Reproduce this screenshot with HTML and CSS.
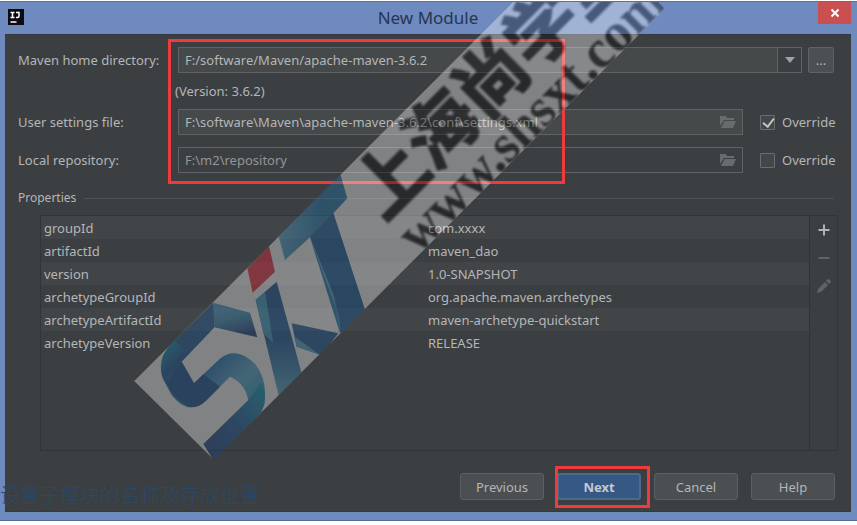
FILE: index.html
```html
<!DOCTYPE html>
<html lang="en">
<head>
<meta charset="utf-8">
<title>New Module</title>
<link rel="stylesheet" href="styles.css">
</head>
<body>
<main class="window">
  <header class="titlebar">
    <svg class="app-icon" viewBox="0 0 16 16" aria-hidden="true"><rect width="16" height="16" fill="#0b0c12"/><path d="M2.500 3.500h4M4.500 3.500v5M2.500 8.500h4M8 3.500h3v3.500q0 1.500-1.500 1.500H8" fill="none" stroke="#fff" stroke-width="1.500"/><path d="M2.500 13h6" stroke="#fff" stroke-width="1.500"/></svg>
    <h1 class="title">New Module</h1>
    <button class="close" aria-label="Close"><svg width="10" height="10" viewBox="0 0 10 10"><path d="M1.500 1.500l7 7M8.500 1.500l-7 7" stroke="#fff" stroke-width="2"/></svg></button>
  </header>
  <div class="content">
    <form class="form">
      <div class="row row-home">
        <label class="label" for="home">Maven home directory:</label>
        <div class="field combo">
          <input id="home" type="text" value="F:/software/Maven/apache-maven-3.6.2">
          <button class="arrow" type="button" aria-label="Show list"><svg width="10" height="6" viewBox="0 0 10 6"><path d="M0 0h10L5 6z" fill="#a0a3a5"/></svg></button>
        </div>
        <button class="browse" type="button">...</button>
      </div>
      <p class="version">(Version: 3.6.2)</p>
      <div class="row">
        <label class="label" for="settings">User settings file:</label>
        <div class="field">
          <input id="settings" type="text" value="F:\software\Maven\apache-maven-3.6.2\conf\settings.xml">
          <svg class="folder" viewBox="0 0 16 12" aria-hidden="true"><path d="M0 10V0h6l1 2h7v2H4zM4.500 5H16l-3 7H1z" fill="#686c6e"/></svg>
        </div>
        <label class="override"><input type="checkbox" checked>Override</label>
      </div>
      <div class="row">
        <label class="label" for="repo">Local repository:</label>
        <div class="field muted">
          <input id="repo" type="text" value="F:\m2\repository">
          <svg class="folder" viewBox="0 0 16 12" aria-hidden="true"><path d="M0 10V0h6l1 2h7v2H4zM4.500 5H16l-3 7H1z" fill="#686c6e"/></svg>
        </div>
        <label class="override"><input type="checkbox">Override</label>
      </div>
      <div class="mark mark-form"></div>
    </form>
    <h2 class="section">Properties</h2>
    <section class="panel">
      <div class="table-area">
        <table>
          <tbody>
            <tr><td>groupId</td><td>com.xxxx</td></tr>
            <tr><td>artifactId</td><td>maven_dao</td></tr>
            <tr><td>version</td><td>1.0-SNAPSHOT</td></tr>
            <tr><td>archetypeGroupId</td><td>org.apache.maven.archetypes</td></tr>
            <tr><td>archetypeArtifactId</td><td>maven-archetype-quickstart</td></tr>
            <tr><td>archetypeVersion</td><td>RELEASE</td></tr>
          </tbody>
        </table>
      </div>
      <div class="tools">
        <button aria-label="Add"><svg width="14" height="14" viewBox="0 0 14 14"><path d="M7 1.500v11M1.500 7h11" stroke="#b0b3b5" stroke-width="2"/></svg></button>
        <button aria-label="Remove"><svg width="14" height="14" viewBox="0 0 14 14"><path d="M1.500 7h11" stroke="#606365" stroke-width="2"/></svg></button>
        <button aria-label="Edit"><svg width="14" height="14" viewBox="0 0 14 14"><path d="M0 14l1-4 7-7 3 3-7 7zM9 2l1.500-1.500q1-1 2.500.5t.5 2.500L12 5z" fill="#606365"/></svg></button>
      </div>
    </section>
    <footer class="actions">
      <button class="btn">Previous</button>
      <div class="next"><button class="btn primary">Next</button><div class="mark mark-next"></div></div>
      <button class="btn">Cancel</button>
      <button class="btn">Help</button>
    </footer>
  </div>
  <p class="caption" lang="zh">设置子模块的名称及存放位置</p>
  <svg class="watermark" width="857" height="520" viewBox="0 1 857 520" aria-hidden="true">
    <defs>
      <linearGradient id="s1" x1="0" y1="0" x2="1" y2="1"><stop offset="0" stop-color="#1763a8"/><stop offset=".2" stop-color="#00a4c4"/><stop offset=".36" stop-color="#0b5099"/><stop offset=".55" stop-color="#1674b8"/><stop offset=".75" stop-color="#58add8"/><stop offset="1" stop-color="#0095bd"/></linearGradient>
      <linearGradient id="s2" x1="0" y1="1" x2="1" y2="0"><stop offset="0" stop-color="#143982"/><stop offset=".5" stop-color="#17569c"/><stop offset="1" stop-color="#009dc2"/></linearGradient>
      <linearGradient id="arm" x1="0" y1="0" x2=".3" y2="1"><stop offset="0" stop-color="#54a7d4"/><stop offset=".5" stop-color="#328cc0"/><stop offset="1" stop-color="#103b80"/></linearGradient>
      <linearGradient id="x" x1="0" y1="0" x2="0" y2="1"><stop offset="0" stop-color="#124f95"/><stop offset=".5" stop-color="#10539d"/><stop offset="1" stop-color="#56add8"/></linearGradient>
      <linearGradient id="t" x1="0" y1="0" x2="1" y2="0"><stop offset="0" stop-color="#52a9d5"/><stop offset=".5" stop-color="#1672af"/><stop offset="1" stop-color="#1c85b7"/></linearGradient>
      <filter id="soft"><feGaussianBlur stdDeviation="2"/></filter>
      <filter id="soft-text"><feGaussianBlur stdDeviation="1"/></filter>
      <clipPath id="strip"><path d="M134 381L514 1H657L665 9 214 460z"/></clipPath>
    </defs>
    <g opacity=".35" clip-path="url(#strip)">
      <path d="M134 381L514 1H657L665 9 214 460z" fill="#fff"/>
      <g transform="translate(120 200) scale(.33333)" filter="url(#soft)">
        <path d="M280 308L150 435Q110 480 128 535L155 585Q205 650 258 602L330 530Q375 550 385 600L432 620Q445 545 408 495 350 435 298 478L222 550 185 485 283 382z" fill="url(#s1)"/>
        <path d="M185 485L140 548Q165 600 205 620 235 625 258 602L300 560 250 523 222 550z" fill="#104894"/>
        <path d="M280 308L283 382 205 462 165 422z" fill="#14529b"/>
        <path d="M250 732L385 600Q400 580 424 550 445 590 425 635L286 790z" fill="url(#s2)"/>
        <path d="M280 308L390 338 412 412 283 382z" fill="url(#arm)"/>
        <path d="M382 205L447 138 465 215 398 278z" fill="#f72135"/>
        <path d="M515 370L655 400 605 465 530 440z" fill="#14569d"/>
        <path d="M525 410L600 465 530 440z" fill="#50a5d0"/>
        <path d="M407 300L470 245 545 520 477 590z" fill="url(#x)"/>
        <path d="M407 300L435 275 460 430 430 400z" fill="#389bcb"/>
        <path d="M475 105L660 -81 682 -5 640 40 735 330 660 400 570 112 495 180z" fill="url(#t)"/>
        <path d="M570 110L640 40 735 330 663 400 645 290z" fill="#11549b"/>
        <path d="M570 110L640 285 663 400 655 345z" fill="#55a8d2"/>
      </g>
      <g transform="translate(134 381) rotate(-45)" fill="#000" filter="url(#soft-text)">
        <text class="wm-name" x="289" y="64">上海尚学堂</text>
        <text class="wm-url" x="290" y="112">www.shsxt.com</text>
      </g>
    </g>
  </svg>
</main>
</body>
</html>
```
FILE: styles.css
```css
* { box-sizing: border-box; }
body {
  margin: 0;
  padding: 1px 0 4px;
  background: #fff;
  color: #b4b6b8;
  font: 13px/18px "Noto Sans", "Open Sans", sans-serif;
}
h1, h2, p { margin: 0; font-weight: 400; }
button, input { font: inherit; color: inherit; margin: 0; padding: 0; }
svg { display: block; }
.window {
  position: relative;
  display: flex;
  flex-direction: column;
  min-height: calc(100vh - 5px);
  overflow: hidden;
  background: #6f8abe;
  border-top: 1px solid #52719f;
  border-bottom: 1px solid #536c9d;
  padding: 0 6px 8px 5px;
}
.titlebar { position: relative; display: flex; justify-content: center; height: 32px; align-items: center; }
.title { font-size: 17px; line-height: 24px; color: #263552; }
.app-icon { position: absolute; left: 3px; top: 7px; width: 16px; height: 16px; }
.close {
  position: absolute;
  right: 0;
  top: 0;
  width: 33px;
  height: 22px;
  display: grid;
  place-items: center;
  border: 0;
  background: #c94f50;
}
.content {
  flex: 1;
  display: flex;
  flex-direction: column;
  background: #3c3f41;
  border-top: 1px solid #35393d;
  border-bottom: 1px solid #35393d;
  padding: 12px 13px 11px 13px;
}
.form { position: relative; display: flex; flex-direction: column; gap: 12px; }
.row { display: flex; align-items: center; height: 26px; }
.row-home { padding-right: 4px; }
.label { flex: 0 0 160px; white-space: nowrap; }
.field {
  flex: 1;
  min-width: 0;
  display: flex;
  align-items: center;
  height: 26px;
  background: #45494a;
  border: 1px solid #606365;
}
.field input { flex: 1; min-width: 0; padding-left: 6px; border: 0; background: none; outline: 0; }
.muted { background: #3c3f41; }
.muted input { color: #929597; }
.folder { width: 16px; height: 12px; margin-right: 6px; }
.combo .arrow {
  width: 24px;
  align-self: stretch;
  display: grid;
  place-items: center;
  background: #3c3f41;
  border: 0;
  border-left: 1px solid #606365;
}
.browse { width: 26px; height: 26px; margin-left: 6px; background: #4c5052; border: 1px solid #606365; border-radius: 2px; }
.version { margin-left: 157px; line-height: 12px; }
.override { flex: 0 0 78px; margin-left: 17px; display: flex; align-items: center; gap: 7px; }
.override input { appearance: none; flex: none; width: 15px; height: 15px; background: #43474a; border: 1px solid #6b6e70; border-radius: 1px; }
.override input:checked::after {
  content: "";
  display: block;
  width: 5px;
  height: 9px;
  margin-left: 4px;
  border: solid #c0c2c4;
  border-width: 0 2px 2px 0;
  transform: rotate(38deg);
}
.mark { position: absolute; border: 3px solid #ef3b3e; pointer-events: none; }
.mark-form { left: 150px; right: 273px; top: -8px; bottom: -11px; }
.section { display: flex; align-items: center; gap: 8px; margin: 16px 4px 8px 0; font-size: 12px; line-height: 18px; }
.section::after { content: ""; flex: 1; height: 1px; background: #505355; }
.panel { flex: 1; display: flex; margin-left: 22px; border: 1px solid #323537; }
.table-area { flex: 1; border-right: 1px solid #323537; }
table { width: 100%; border-collapse: collapse; table-layout: fixed; }
td { height: 23px; padding: 0 3px; }
tr:nth-child(odd) { background: #424547; }
.tools { flex: 0 0 27px; display: flex; flex-direction: column; align-items: center; gap: 14px; padding-top: 7px; }
.tools button { border: 0; background: none; }
.actions { display: flex; justify-content: flex-end; gap: 13px; margin: 22px 3px 0 0; }
.btn { display: block; width: 84px; height: 27px; background: #4b4f51; border: 1px solid #5d6062; border-radius: 3px; }
.next { position: relative; }
.primary { background: #355984; border: 2px solid #4b6b8d; color: #c5cad0; font-weight: 700; }
.mark-next { inset: -7px -9px -8px -2px; }
.caption {
  position: absolute;
  left: 0;
  bottom: 10px;
  color: #2b4868;
  font: 300 20px/30px "Noto Sans CJK SC", sans-serif;
  white-space: nowrap;
}
.watermark { position: absolute; left: 0; top: -1px; pointer-events: none; }
.wm-name { font: 700 71px "Noto Sans CJK SC", sans-serif; stroke: #000; stroke-width: 2px; }
.wm-url { font: 700 54px "Liberation Serif", serif; }
```
